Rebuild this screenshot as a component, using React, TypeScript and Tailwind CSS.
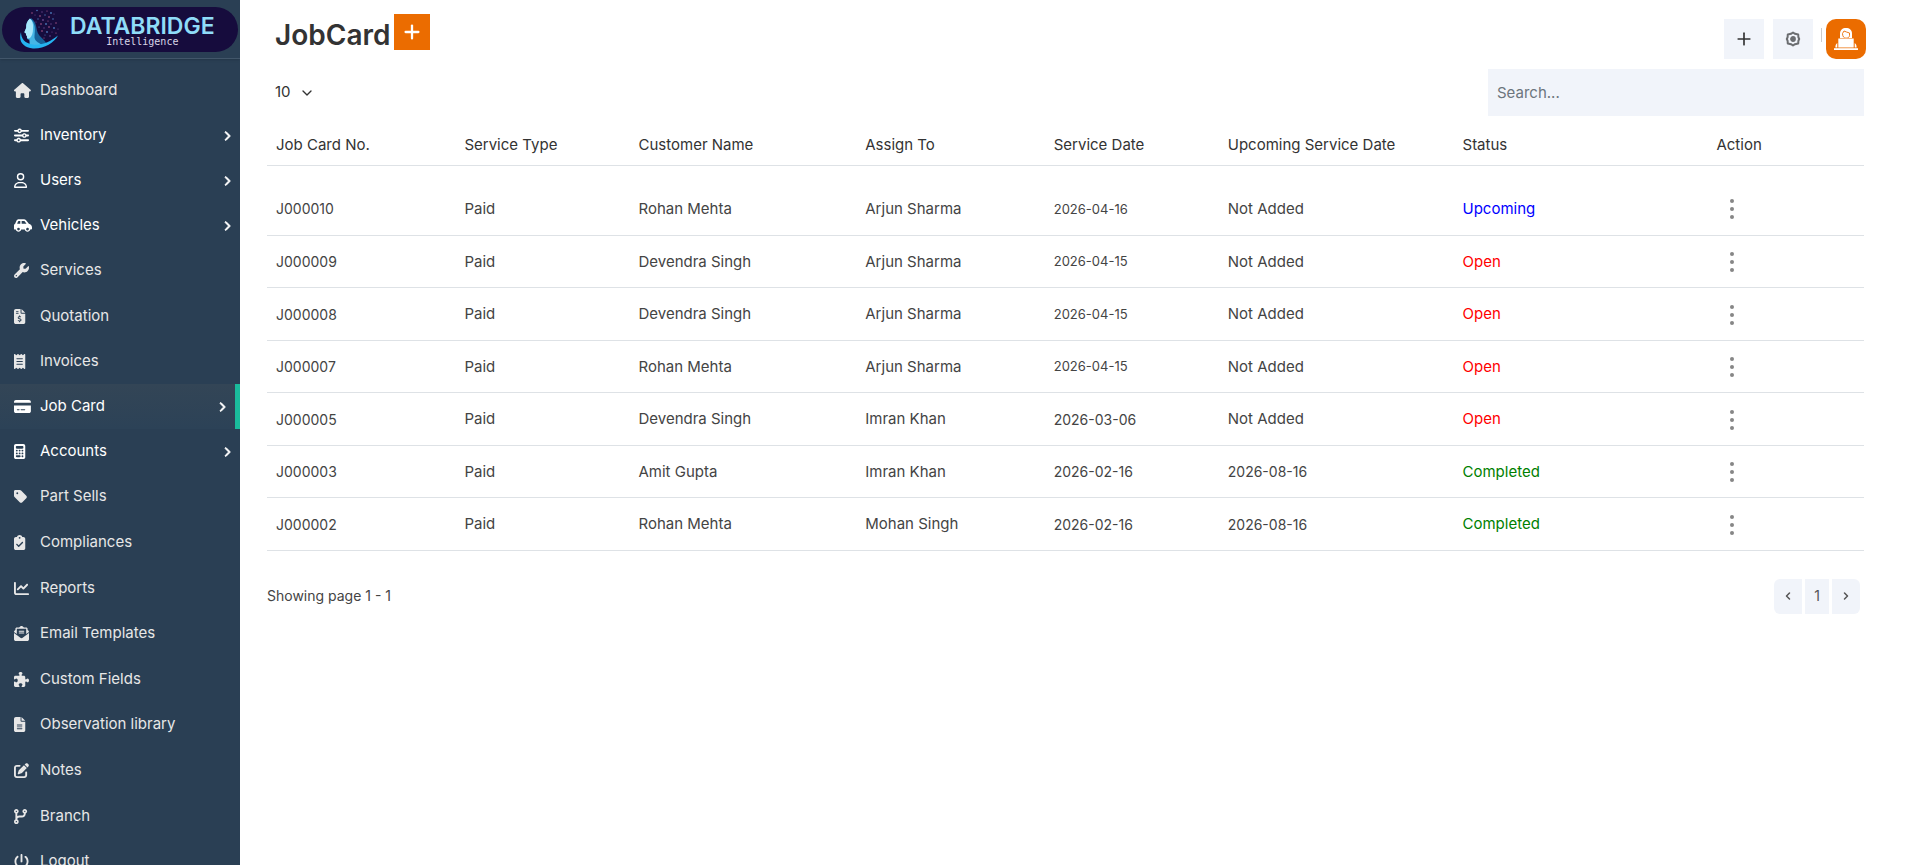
import { useState } from "react";
import type { IconType } from "react-icons";
import {
    FaHouse,
    FaSliders,
    FaRegUser,
    FaCarSide,
    FaWrench,
    FaFileInvoiceDollar,
    FaReceipt,
    FaCreditCard,
    FaCalculator,
    FaTag,
    FaClipboardCheck,
    FaChartLine,
    FaEnvelopeOpenText,
    FaPuzzlePiece,
    FaFileLines,
    FaPenToSquare,
    FaCodeBranch,
    FaPowerOff,
    FaChevronRight,
} from "react-icons/fa6";
import { ChevronDown, ChevronLeft, ChevronRight, Plus } from "lucide-react";

type NavItem = { label: string; icon: IconType; sub?: boolean; tall?: boolean; active?: boolean };

const navItems: NavItem[] = [
    { label: "Dashboard", icon: FaHouse },
    { label: "Inventory", icon: FaSliders, sub: true },
    { label: "Users", icon: FaRegUser, sub: true },
    { label: "Vehicles", icon: FaCarSide, sub: true },
    { label: "Services", icon: FaWrench },
    { label: "Quotation", icon: FaFileInvoiceDollar, tall: true },
    { label: "Invoices", icon: FaReceipt },
    { label: "Job Card", icon: FaCreditCard, sub: true, active: true },
    { label: "Accounts", icon: FaCalculator, sub: true },
    { label: "Part Sells", icon: FaTag },
    { label: "Compliances", icon: FaClipboardCheck, tall: true },
    { label: "Reports", icon: FaChartLine, tall: true },
    { label: "Email Templates", icon: FaEnvelopeOpenText },
    { label: "Custom Fields", icon: FaPuzzlePiece, tall: true },
    { label: "Observation library", icon: FaFileLines },
    { label: "Notes", icon: FaPenToSquare, tall: true },
    { label: "Branch", icon: FaCodeBranch, tall: true },
    { label: "Logout", icon: FaPowerOff },
];

const columns = [
    { label: "Job Card No.", width: "w-[11.8%]" },
    { label: "Service Type", width: "w-[10.9%]" },
    { label: "Customer Name", width: "w-[14.2%]" },
    { label: "Assign To", width: "w-[11.8%]" },
    { label: "Service Date", width: "w-[10.9%]" },
    { label: "Upcoming Service Date", width: "w-[14.7%]" },
    { label: "Status", width: "w-[15.9%]" },
    { label: "Action", width: "" },
];

const jobs = [
    { no: "J000010", type: "Paid", customer: "Rohan Mehta", assign: "Arjun Sharma", date: "2026-04-16", next: "", status: "Upcoming" },
    { no: "J000009", type: "Paid", customer: "Devendra Singh", assign: "Arjun Sharma", date: "2026-04-15", next: "", status: "Open" },
    { no: "J000008", type: "Paid", customer: "Devendra Singh", assign: "Arjun Sharma", date: "2026-04-15", next: "", status: "Open" },
    { no: "J000007", type: "Paid", customer: "Rohan Mehta", assign: "Arjun Sharma", date: "2026-04-15", next: "", status: "Open" },
    { no: "J000005", type: "Paid", customer: "Devendra Singh", assign: "Imran Khan", date: "2026-03-06", next: "", status: "Open" },
    { no: "J000003", type: "Paid", customer: "Amit Gupta", assign: "Imran Khan", date: "2026-02-16", next: "2026-08-16", status: "Completed" },
    { no: "J000002", type: "Paid", customer: "Rohan Mehta", assign: "Mohan Singh", date: "2026-02-16", next: "2026-08-16", status: "Completed" },
];

const statusColor: Record<string, string> = {
    Upcoming: "text-[#0000ff]",
    Open: "text-[#ff0000]",
    Completed: "text-[#008000]",
};

// scattered dots behind the head: x, y, radius
const dots = [
    [12, 4, 0.7], [17, 1.5, 0.8], [22, 3, 0.7], [27, 2, 0.6], [31, 4, 0.9], [15, 6, 0.6], [20, 7, 0.8], [25, 6, 0.7],
    [34, 5, 0.6], [29, 8, 0.8], [18, 10, 0.7], [23, 11, 0.9], [28, 12, 0.6], [33, 10, 0.8], [16, 13, 0.6], [21, 15, 0.8],
    [26, 15, 0.9], [31, 15, 0.7], [36, 14, 0.7], [19, 18, 0.6], [24, 19, 0.7], [29, 18, 0.8], [34, 19, 0.9], [38, 20, 0.6],
    [22, 22, 0.8], [27, 23, 0.9], [32, 23, 0.6], [36, 24, 0.6], [25, 26, 0.6], [30, 27, 0.8], [24, 29, 0.6],
];

function BrandMark() {
    return (
        <svg viewBox="0 0 40 42" className="h-[42px] w-10" aria-hidden="true">
            {dots.map(([x, y, r], i) => (
                <circle key={i} cx={x} cy={y} r={r} fill={i % 3 === 0 ? "#b8608f" : i % 3 === 1 ? "#4a78b8" : "#6b4a8f"} />
            ))}
            <path d="M11 9C18 14 15 20 19 26C21 29 25 31 26 34C22 37 15 37 11 36L9 31Z" fill="#15639a" />
            <path d="M10 9.500C7 12 6 15 6.200 18.500C6 20 4.500 22 4.500 23.500L6 24.500V26L7 27C6.500 30 8 30.500 9.500 30.500C10 33 9 35 10 36H22C18 33 14 32 14.500 27C15 22 16 14 10 9.500Z" fill="#45b6e6" />
            <path d="M10 9.500C7 12 6 15 6.200 18.500C6 20 4.500 22 4.500 23.500L6 24.500V26L7 27C6.500 29 8 30 10 29C12 27 13 24 13 20C13.500 15 12.500 12 10 9.500Z" fill="#a9e8fb" />
            <path d="M1 23C-2 32 3 38.500 13 39.500C24 40 34 34 38 26.500C30 33 22 36.500 13 35.500C5 34.500 1 30 1 23Z" fill="#25b4f0" />
        </svg>
    );
}

function AvatarIcon() {
    return (
        <svg viewBox="0 0 40 40" className="size-10" aria-hidden="true">
            <path d="M14 19V14.500C14 11 16.500 9 20 9C23.500 9 26 11 26 14.500V19Z" fill="#fff" />
            <path d="M16.500 14.500L18 12L20.500 13L23.500 14V16.500C23.500 18 22 19.200 20 19.200C18 19.200 16.500 17.500 16.500 14.500Z" fill="#fff" stroke="#eb6c00" strokeWidth="0.900" />
            <path d="M12.300 19.500H27.700V28.500H12.300Z" fill="#fff" />
            <path d="M11.300 24C9.600 25 9.400 27 9.400 28.500H11.300ZM28.700 24C30.400 25 30.600 27 30.600 28.500H28.700Z" fill="#fff" />
            <path d="M8 29.200H32V31H8Z" fill="#fff" />
        </svg>
    );
}

function GearIcon() {
    return (
        <svg viewBox="0 0 16 16" className="size-4" fill="none" stroke="#6b6d70" aria-hidden="true">
            <path d="M8 1.500L10 2.800L13.200 3.400L13.400 6.300L14.200 8L13.400 9.700L13.200 12.600L10 13.200L8 14.500L6 13.200L2.800 12.600L2.600 9.700L1.800 8L2.600 6.300L2.800 3.400L6 2.800Z" strokeWidth="2" strokeLinejoin="round" />
            <circle cx="8" cy="8" r="2" strokeWidth="1.800" fill="#6b6d70" />
        </svg>
    );
}

function Sidebar() {
    return (
        <aside className="sticky top-0 h-screen w-60 shrink-0 overflow-hidden bg-[#2a3f54]">
            <div className="border-b border-[#42566a] px-0.5 pt-[7px] pb-1.5 shadow-sm">
                <a href="#" className="flex h-[45px] items-center gap-2.5 rounded-full bg-[#160c3d] pl-[18px]">
                    <BrandMark />
                    <span className="flex flex-col items-center pt-1">
                        <span className="text-[23px] leading-5 font-semibold text-[#8fdcf8]">DATABRIDGE</span>
                        <span className="font-['DejaVu_Sans_Mono',monospace] text-[10px] leading-3 text-[#d8d5e6]">Intelligence</span>
                    </span>
                </a>
            </div>
            <nav className="pt-[9px]">
                {navItems.map(({ label, icon: Icon, sub, tall, active }) => (
                    <a
                        key={label}
                        href="#"
                        className={`flex items-center pl-3.5 text-[15px] ${tall ? "h-[46px]" : "h-[45px]"} ${sub ? "text-white" : "text-[#e7e7e7]"} ${active ? "border-r-[5px] border-[#1abb9c] bg-linear-to-b from-[#334556] to-[#2c4257]" : ""}`}
                    >
                        <Icon className="mr-2 h-[15px] w-[18px] shrink-0" preserveAspectRatio="xMinYMid" />
                        {label}
                        {sub && <FaChevronRight size={10} strokeWidth={50} className="mr-2 ml-auto" />}
                    </a>
                ))}
            </nav>
        </aside>
    );
}

export default function App() {
    const [search, setSearch] = useState("");
    const [pageSize, setPageSize] = useState("10");

    const rows = jobs.filter((job) => Object.values(job).join(" ").toLowerCase().includes(search.toLowerCase()));

    return (
        <div className="flex min-h-screen bg-white font-['Inter',sans-serif] text-[15px] text-[#444]">
            <Sidebar />
            <main className="flex-1 pr-[55px] pl-[27px]">
                <header className="flex items-start justify-between pt-3.5">
                    <div className="flex items-start gap-1 pl-2">
                        <h1 className="pt-[3px] text-[28px] leading-9 font-semibold text-[#333]">JobCard</h1>
                        <button type="button" aria-label="Add job card" className="flex size-9 items-center justify-center bg-[#eb6c00] text-white">
                            <Plus size={22} strokeWidth={2.5} />
                        </button>
                    </div>
                    <div className="-mr-0.5 flex items-center pt-[5px]">
                        <button type="button" aria-label="Quick add" className="mr-[9px] flex size-10 items-center justify-center bg-[#f1f4fa] text-[#333]">
                            <Plus size={20} />
                        </button>
                        <button type="button" aria-label="Settings" className="flex size-10 items-center justify-center bg-[#f1f4fa]">
                            <GearIcon />
                        </button>
                        <span className="mr-1 ml-2 mb-2 h-3.5 w-px bg-[#ccc]" />
                        <button type="button" aria-label="Profile" className="size-10 rounded-[10px] bg-[#eb6c00]">
                            <AvatarIcon />
                        </button>
                    </div>
                </header>

                <div className="flex items-center justify-between pt-2.5">
                    <div className="relative ml-2">
                        <select
                            aria-label="Rows per page"
                            value={pageSize}
                            onChange={(e) => setPageSize(e.target.value)}
                            className="w-10 appearance-none bg-transparent text-[15px] text-[#333]"
                        >
                            <option>10</option>
                            <option>25</option>
                            <option>50</option>
                        </select>
                        <ChevronDown size={16} className="pointer-events-none absolute top-1 right-0 text-[#333]" />
                    </div>
                    <input
                        type="text"
                        aria-label="Search"
                        placeholder="Search..."
                        value={search}
                        onChange={(e) => setSearch(e.target.value)}
                        className="h-[47px] w-[376px] bg-[#f1f4fa] px-[9px] text-[15px] placeholder:text-[#6c757d]"
                    />
                </div>

                <table className="mt-2 w-full table-fixed border-collapse text-left">
                    <thead>
                        <tr className="h-[41px] border-b border-[#dee2e6] text-[#333]">
                            {columns.map((col) => (
                                <th key={col.label} className={`px-[9px] pt-0.5 font-normal ${col.width}`}>
                                    {col.label}
                                </th>
                            ))}
                        </tr>
                    </thead>
                    <tbody className="[&_td]:px-[9px] [&_td]:pt-0.5">
                        <tr className="h-[17px]">
                            <td colSpan={8} />
                        </tr>
                        {rows.map((job) => (
                            <tr key={job.no} className="border-b border-[#dee2e6] odd:h-[52px] even:h-[53px]">
                                <td className="text-sm">{job.no}</td>
                                <td>{job.type}</td>
                                <td>{job.customer}</td>
                                <td>{job.assign}</td>
                                <td className={job.next || job.no === "J000005" ? "text-sm" : "text-[13px]"}>{job.date}</td>
                                <td className={job.next ? "text-sm" : ""}>{job.next || "Not Added"}</td>
                                <td className={statusColor[job.status]}>{job.status}</td>
                                <td>
                                    <button type="button" aria-label={`Actions for ${job.no}`} className="flex w-8 justify-center">
                                        <svg viewBox="0 0 4 20" className="h-5 w-1" fill="#868686">
                                            <circle cx="2" cy="2" r="2" />
                                            <circle cx="2" cy="10" r="2" />
                                            <circle cx="2" cy="18" r="2" />
                                        </svg>
                                    </button>
                                </td>
                            </tr>
                        ))}
                    </tbody>
                </table>

                <div className="flex items-center justify-between pt-7 pr-1">
                    <p className="text-sm">Showing page 1 - 1</p>
                    <div className="flex gap-[3px] text-[#555]">
                        <button type="button" aria-label="Previous page" className="flex h-[35px] w-7 items-center justify-center rounded-l-md bg-[#f1f4fa]">
                            <ChevronLeft size={12} strokeWidth={3} />
                        </button>
                        <button type="button" className="h-[35px] w-6 bg-[#f1f4fa] text-sm">1</button>
                        <button type="button" aria-label="Next page" className="flex h-[35px] w-7 items-center justify-center rounded-r-md bg-[#f1f4fa]">
                            <ChevronRight size={12} strokeWidth={3} />
                        </button>
                    </div>
                </div>
            </main>
        </div>
    );
}
